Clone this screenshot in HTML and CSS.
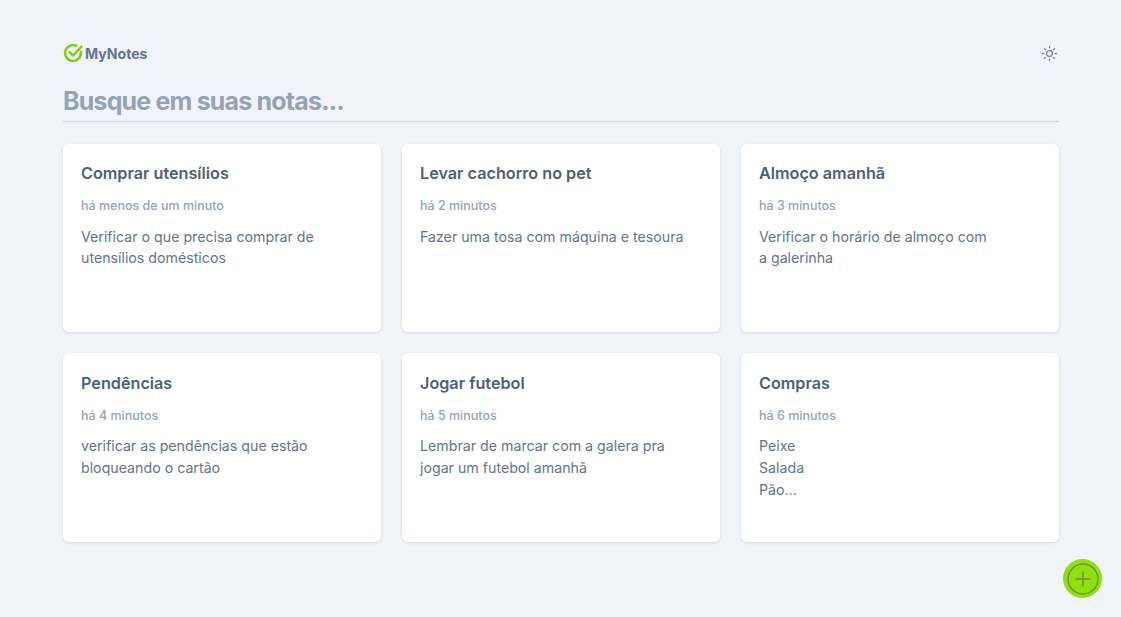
FILE: index.html
```html
<!DOCTYPE html>
<html lang="pt-BR">
<head>
<meta charset="utf-8">
<title>MyNotes</title>
<link rel="stylesheet" href="styles.css">
</head>
<body>
<main class="page">
  <header class="top">
    <div class="logo">
      <svg class="logo-icon" viewBox="0 0 24 24" fill="none"><path d="M21.5 10.5V12a9.5 9.5 0 1 1-5.6-8.7" stroke="#84cc16" stroke-width="3" stroke-linecap="round"/><path d="M8 11l4 4L22 4.5" stroke="#84cc16" stroke-width="3" stroke-linecap="round" stroke-linejoin="round"/></svg>
      <span>MyNotes</span>
    </div>
    <svg class="sun" viewBox="0 0 24 24" fill="none" stroke="#7c8ba1" stroke-width="1.6" stroke-linecap="round"><circle cx="12" cy="12" r="3.7"/><path d="M12 3v1.8M12 19.2V21M3 12h1.8M19.2 12H21M5.6 5.6l1.3 1.3M17.1 17.1l1.3 1.3M5.6 18.4l1.3-1.3M17.1 6.9l1.3-1.3"/></svg>
  </header>
  <div class="search">Busque em suas notas...</div>
  <section class="grid">
    <article class="card"><h2>Comprar utensílios</h2><time>há menos de um minuto</time><p>Verificar o que precisa comprar de<br>utensílios domésticos</p></article>
    <article class="card"><h2>Levar cachorro no pet</h2><time>há 2 minutos</time><p>Fazer uma tosa com máquina e tesoura</p></article>
    <article class="card"><h2>Almoço amanhã</h2><time>há 3 minutos</time><p>Verificar o horário de almoço com<br>a galerinha</p></article>
    <article class="card"><h2>Pendências</h2><time>há 4 minutos</time><p>verificar as pendências que estão<br>bloqueando o cartão</p></article>
    <article class="card"><h2>Jogar futebol</h2><time>há 5 minutos</time><p>Lembrar de marcar com a galera pra<br>jogar um futebol amanhã</p></article>
    <article class="card"><h2>Compras</h2><time>há 6 minutos</time><p>Peixe<br>Salada<br>Pão...</p></article>
  </section>
</main>
<button class="fab" aria-label="Nova nota">
  <svg viewBox="0 0 32 32" fill="none" stroke="#6f8f42" stroke-width="1.4" stroke-linecap="round"><circle cx="16" cy="16" r="15"/><path d="M16 9v14M9 16h14"/></svg>
</button>
</body>
</html>
```
FILE: styles.css
```css
* { box-sizing: border-box; }
html, body { margin: 0; height: 100%; }
body {
  background: #f0f4f8;
  font-family: Inter, "Liberation Sans", sans-serif;
  overflow: hidden;
}
.page { padding: 43px 62px 0 63px; }
.top { display: flex; justify-content: space-between; align-items: center; height: 20px; }
.logo { display: flex; align-items: center; gap: 2px; color: #64748b; font-size: 14.1px; font-weight: 700; }
.logo-icon { width: 20px; height: 20px; }
.sun { width: 19px; height: 19px; }
.search {
  margin-top: 12px;
  height: 47px;
  padding-top: 9px;
  border-bottom: 1px solid #cbd5e1;
  color: #94a3b8;
  font-size: 25px;
  line-height: 34px;
  font-weight: 700;
  letter-spacing: -0.82px;
}
.grid {
  margin-top: 21.7px;
  display: grid;
  grid-template-columns: repeat(3, 318px);
  grid-auto-rows: 188.5px;
  gap: 21px;
}
.card {
  background: #fff;
  border-radius: 6px;
  padding: 17.4px 18px;
  box-shadow: 0 1px 3px rgba(15, 23, 42, 0.12);
}
.card h2 { margin: 0; font-size: 16.2px; line-height: 24px; font-weight: 600; color: #4f6078; }
.card time { display: block; margin-top: 11px; font-size: 12.5px; line-height: 20px; font-weight: 500; color: #94a3b8; }
.card p { margin: 9.6px 0 0; font-size: 14.2px; line-height: 21.8px; color: #64748b; }
.fab {
  position: fixed;
  left: 1063px;
  top: 559px;
  width: 39px;
  height: 39px;
  padding: 3.5px;
  border: 0;
  border-radius: 50%;
  background: #90e010;
}
.fab svg { display: block; width: 32px; height: 32px; }
```
